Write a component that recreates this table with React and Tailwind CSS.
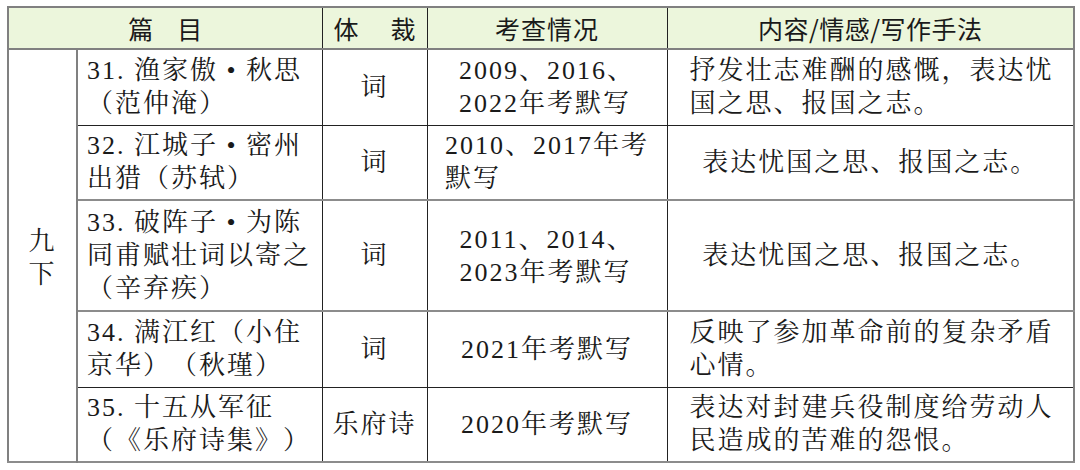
import React from 'react';

const bodyFont = { fontFamily: "'Liberation Serif', 'Noto Serif CJK SC', 'Noto Sans CJK SC', serif" };
const headFont = { fontFamily: "'Noto Sans CJK SC', 'Liberation Sans', sans-serif" };

const rows = [
  {
    title: ['31. 渔家傲 • 秋思', '（范仲淹）'],
    genre: '词',
    exam: ['2009、2016、', '2022年考默写'],
    content: ['抒发壮志难酬的感慨，表达忧', '国之思、报国之志。'],
    center: false,
    h: 'h-[76px]',
    line: 'border-b border-b-[#222]',
  },
  {
    title: ['32. 江城子 • 密州', '出猎（苏轼）'],
    genre: '词',
    exam: ['2010、2017年考', '默写'],
    content: ['表达忧国之思、报国之志。'],
    center: true,
    h: 'h-[75px]',
    line: 'border-b-2 border-b-[#8c8c8c]',
  },
  {
    title: ['33. 破阵子 • 为陈', '同甫赋壮词以寄之', '（辛弃疾）'],
    genre: '词',
    exam: ['2011、2014、', '2023年考默写'],
    content: ['表达忧国之思、报国之志。'],
    center: true,
    h: 'h-[111px]',
    line: 'border-b-2 border-b-[#8c8c8c]',
  },
  {
    title: ['34. 满江红（小住', '京华）（秋瑾）'],
    genre: '词',
    exam: ['2021年考默写'],
    content: ['反映了参加革命前的复杂矛盾', '心情。'],
    center: false,
    h: 'h-[76px]',
    line: 'border-b border-b-[#222]',
  },
  {
    title: ['35. 十五从军征', '（《乐府诗集》）'],
    genre: '乐府诗',
    exam: ['2020年考默写'],
    content: ['表达对封建兵役制度给劳动人', '民造成的苦难的怨恨。'],
    center: false,
    h: 'h-[75px]',
    line: 'border-b-2 border-b-[#8c8c8c]',
  },
];

function Lines({ items }) {
  return items.map((t, i) => (
    <div key={i} className="whitespace-pre">
      {t}
    </div>
  ));
}

export default function App() {
  return (
    <div className="w-[1080px] h-[470px] bg-white pt-[6px] pl-[7px]">
      <table
        className="table-fixed border-collapse w-[1066px] border-2 border-[#808080] text-[#1a1a1a] [text-spacing-trim:space-all]"
        style={bodyFont}
      >
        <colgroup>
          <col className="w-[69px]" />
          <col className="w-[245px]" />
          <col className="w-[105px]" />
          <col className="w-[240px]" />
          <col className="w-[407px]" />
        </colgroup>
        <thead>
          <tr className="h-[42px] bg-[#ecf6dc] text-[25px] leading-none border-b-2 border-b-[#808080]" style={headFont}>
            <th colSpan={2} className="font-normal">
              <span className="mr-[24px]">篇</span>
              <span>目</span>
            </th>
            <th className="font-normal border-l border-l-[#222]">
              <div className="flex justify-between px-[11px]">
                <span>体</span>
                <span>裁</span>
              </div>
            </th>
            <th className="font-normal border-l border-l-[#222] tracking-[1px]">考查情况</th>
            <th className="font-normal border-l border-l-[#222] tracking-[0.5px]">内容/情感/写作手法</th>
          </tr>
        </thead>
        <tbody className="text-[26px] leading-[33px] tracking-[2px]">
          {rows.map((r, i) => (
            <tr key={i} className={`${r.h} ${r.line}`}>
              {i === 0 && (
                <td rowSpan={5} className="border-r-2 border-r-[#808080] text-center align-middle">
                  <div className="pt-[4px]">九</div>
                  <div>下</div>
                </td>
              )}
              <td className="pl-[9px] align-middle">
                <Lines items={r.title} />
              </td>
              <td className="border-l border-l-[#222] text-center align-middle">{r.genre}</td>
              <td className="border-l border-l-[#222] align-middle">
                <div className="flex justify-center">
                  <div className="text-left">
                    <Lines items={r.exam} />
                  </div>
                </div>
              </td>
              <td className={`border-l border-l-[#222] align-middle ${r.center ? 'text-center' : 'pl-[22px]'}`}>
                <Lines items={r.content} />
              </td>
            </tr>
          ))}
        </tbody>
      </table>
    </div>
  );
}
